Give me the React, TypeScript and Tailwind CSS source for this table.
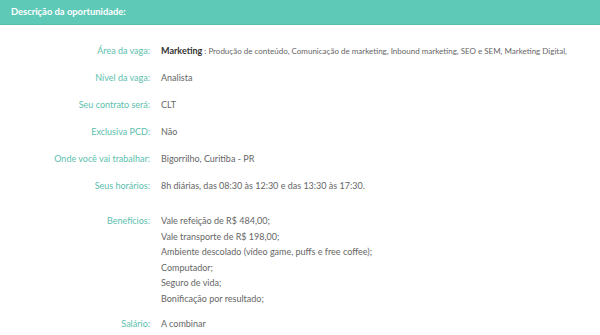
const rows: [string, string][] = [
  ["Nível da vaga:", "Analista"],
  ["Seu contrato será:", "CLT"],
  ["Exclusiva PCD:", "Não"],
  ["Onde você vai trabalhar:", "Bigorrilho, Curitiba - PR"],
  ["Seus horários:", "8h diárias, das 08:30 às 12:30 e das 13:30 às 17:30."],
];

const beneficios = [
  "Vale refeição de R$ 484,00;",
  "Vale transporte de R$ 198,00;",
  "Ambiente descolado (vídeo game, puffs e free coffee);",
  "Computador;",
  "Seguro de vida;",
  "Bonificação por resultado;",
];

function Label({ children }: { children: React.ReactNode }) {
  return <div className="w-[150px] shrink-0 text-right text-[#5cc0ae]">{children}</div>;
}

export default function App() {
  return (
    <div className="min-h-screen bg-white font-['Lato',sans-serif] text-[9px] text-[#666] whitespace-nowrap">
      <div className="h-[25px] bg-[#5fc9b8] border-b border-[#56bcab] flex items-center px-[11px]">
        <h2 className="text-white font-bold text-[9.4px]">Descrição da oportunidade:</h2>
      </div>

      <div className="pt-[12px]">
        <div className="flex h-[27px] items-center gap-[11px]">
          <Label>Área da vaga:</Label>
          <div>
            <span className="font-bold text-[#333]">Marketing</span>
            <span className="text-[8px]"> : Produção de conteúdo, Comunicação de marketing, Inbound marketing, SEO e SEM, Marketing Digital,</span>
          </div>
        </div>

        {rows.map(([label, value]) => (
          <div key={label} className="flex h-[27px] items-center gap-[11px]">
            <Label>{label}</Label>
            <div>{value}</div>
          </div>
        ))}

        <div className="flex gap-[11px] mt-[14px] leading-[15.5px]">
          <Label>Benefícios:</Label>
          <div className="flex flex-col">
            {beneficios.map((b) => (
              <div key={b}>{b}</div>
            ))}
          </div>
        </div>

        <div className="flex h-[27px] items-center gap-[11px] mt-[4px]">
          <Label>Salário:</Label>
          <div>A combinar</div>
        </div>
      </div>
    </div>
  );
}
